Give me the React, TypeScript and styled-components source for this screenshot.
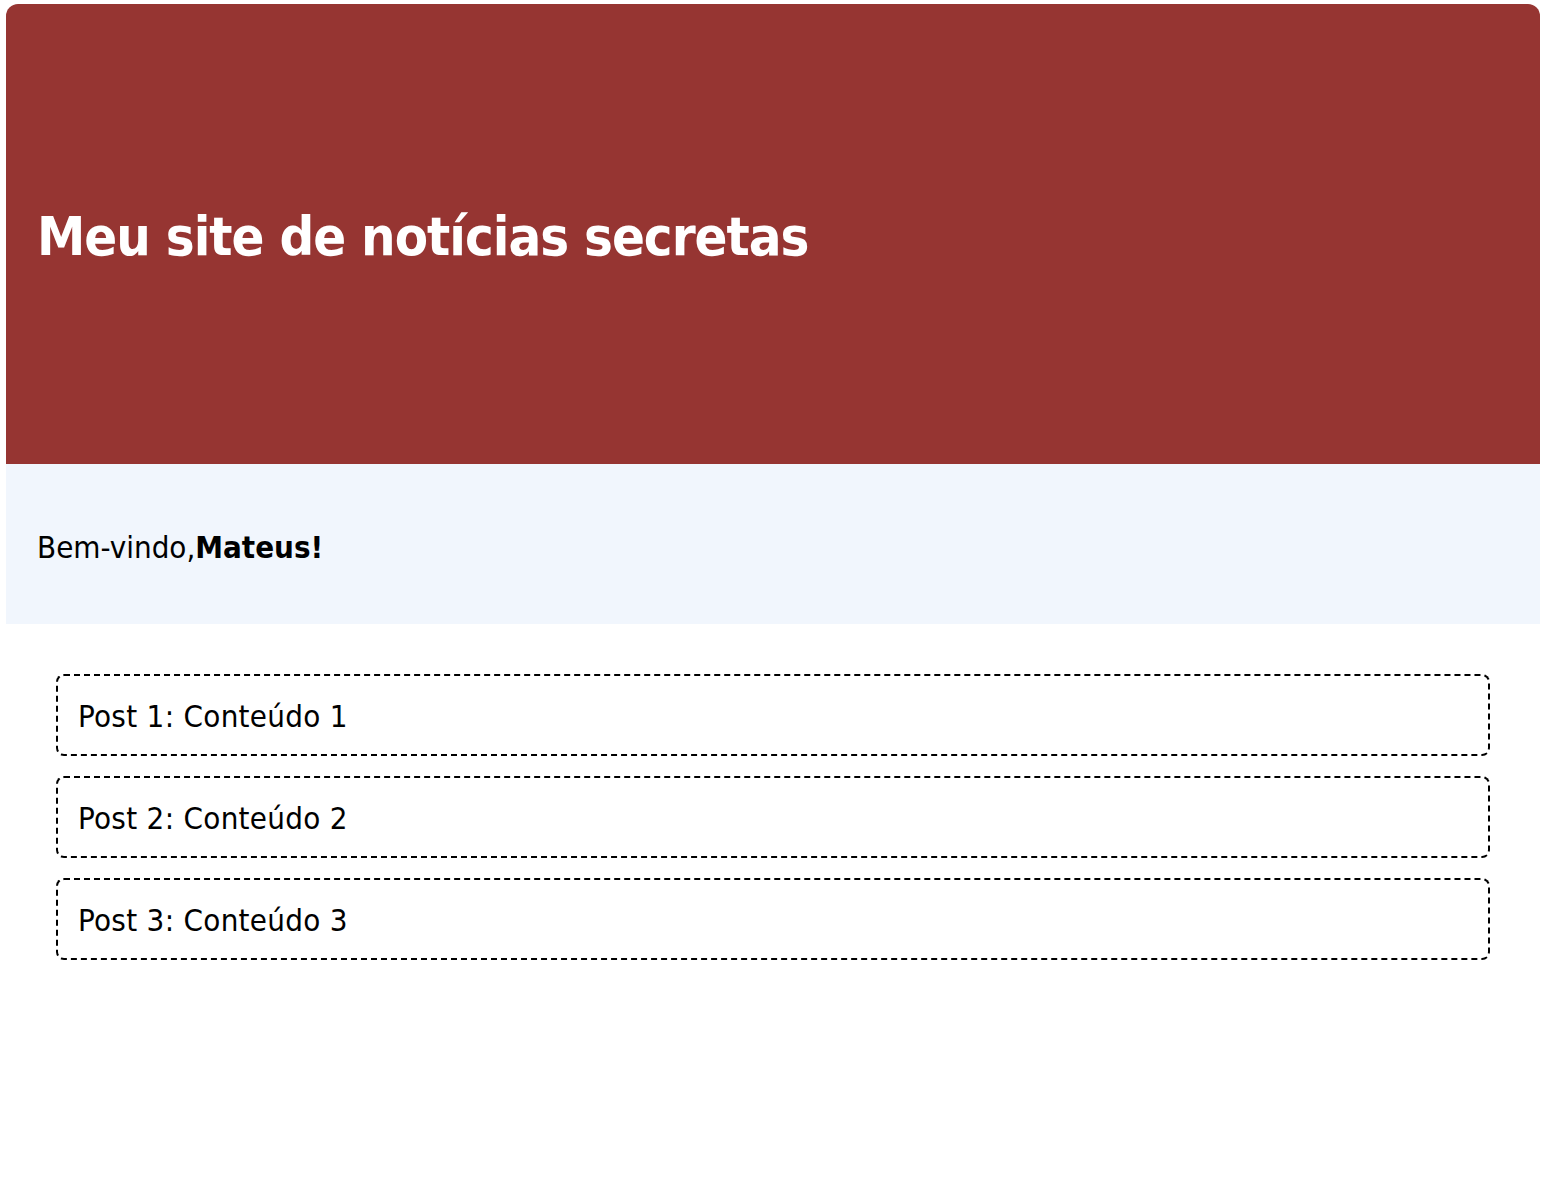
import React from "react";
import styled, { createGlobalStyle } from "styled-components";

const Global = createGlobalStyle`
  html, body { margin: 0; padding: 0; background: #ffffff; }
  body { font-family: "DejaVu Sans Condensed", "DejaVu Sans", sans-serif; color: #000; }
`;

const Page = styled.div`
  padding: 4px 6px;
`;

const Header = styled.header`
  height: 460px;
  background: #963532;
  border-radius: 12px 12px 0 0;
  display: flex;
  align-items: center;
  padding: 0 31px;
`;

const Title = styled.h1`
  margin: 0;
  color: #ffffff;
  font-size: 54px;
  font-weight: bold;
  letter-spacing: -1px;
  line-height: 1;
  padding-top: 6px;
`;

const Welcome = styled.section`
  height: 160px;
  background: #f1f6fd;
  display: flex;
  align-items: center;
  padding: 6px 31px 0;
  box-sizing: border-box;
  font-size: 31px;
  letter-spacing: 0;
`;

const Posts = styled.main`
  display: flex;
  flex-direction: column;
  gap: 20px;
  padding: 50px 50px;
`;

const Post = styled.div`
  height: 76px;
  border: 2px dashed #000;
  border-radius: 8px;
  display: flex;
  align-items: center;
  padding: 2px 20px 0;
  box-sizing: content-box;
  font-size: 31px;
  letter-spacing: 0.3px;
`;

const posts = [1, 2, 3];

export default function App() {
  return (
    <>
      <Global />
      <Page>
        <Header>
          <Title>Meu site de notícias secretas</Title>
        </Header>
        <Welcome>
          Bem-vindo,<b>Mateus!</b>
        </Welcome>
        <Posts>
          {posts.map((n) => (
            <Post key={n}>
              Post {n}: Conteúdo {n}
            </Post>
          ))}
        </Posts>
      </Page>
    </>
  );
}
